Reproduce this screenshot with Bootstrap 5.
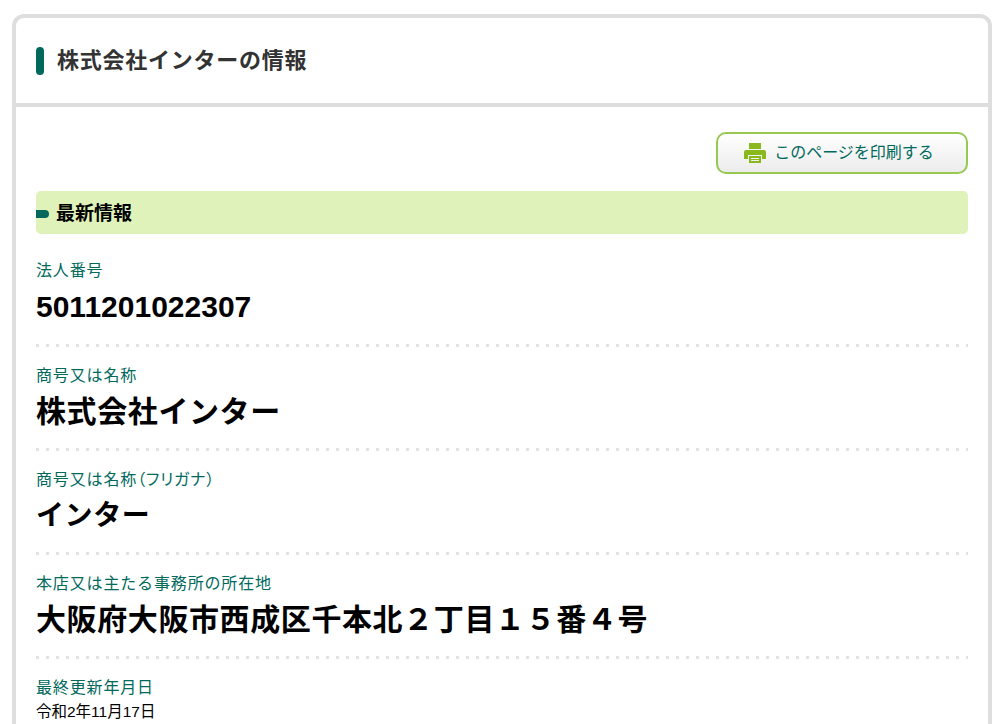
<!DOCTYPE html>
<html lang="ja">

<head>
  <meta charset="UTF-8" />
  <meta name="viewport" content="width=device-width, initial-scale=1.0" />
  <title>株式会社インターの情報</title>
  <link href="https://cdn.jsdelivr.net/npm/bootstrap@5.3.3/dist/css/bootstrap.min.css" rel="stylesheet" />
  <style>
    html, body {
      height: 724px;
      overflow: hidden;
    }

    body {
      font-family: "Liberation Sans", "Noto Sans CJK JP", sans-serif;
      background: #fff;
      color: #000;
      padding: 14px 16px 0 12px;
    }

    .info-box {
      border: 4px solid #dedede;
      border-bottom: 0;
      border-radius: 12px 12px 0 0;
      height: 710px;
    }

    .info-head {
      height: 85px;
      padding-left: 20px;
      border-bottom: 4px solid #dedede;
      box-sizing: content-box;
    }

    .info-head::before {
      content: "";
      width: 8px;
      height: 28px;
      margin-right: 13px;
      background: #00695c;
      border-radius: 4px;
    }

    .info-head h1 {
      margin: 0;
      font-size: 22px;
      line-height: 28px;
      font-weight: 700;
      letter-spacing: .75px;
      color: #333;
    }

    .info-body {
      padding: 25px 20px 0;
    }

    .print-btn {
      width: 252px;
      height: 42px;
      padding-right: 6px;
      border: 2px solid #97c851;
      border-radius: 10px;
      background: linear-gradient(#fff, #ececec);
      color: #00695c;
      font-size: 16px;
    }

    .print-btn svg {
      width: 22px;
      height: 20px;
    }

    .latest-bar {
      height: 43px;
      margin-top: 17px;
      margin-bottom: 26px;
      padding-top: 3px;
      background: #dff2b9;
      border-radius: 5px;
      font-size: 19px;
      font-weight: 700;
    }

    .latest-bar::before {
      content: "";
      width: 13px;
      height: 8px;
      margin-right: 7px;
      background: #00695c;
      border-radius: 0 4px 4px 0;
    }

    .info-row {
      height: 104px;
      padding-bottom: 3px;
      background: repeating-linear-gradient(90deg, #e2e2e2 0 3px, transparent 3px 10px) left bottom / 100% 3px no-repeat;
    }

    .info-row + .info-row {
      padding-top: 18px;
    }

    .first-row {
      height: 87px;
    }

    .last-row {
      height: auto;
      padding-bottom: 0;
      background: none;
    }

    .info-label {
      display: block;
      font-size: 16px;
      line-height: 22px;
      letter-spacing: .85px;
      color: #00695c;
    }

    .label-kana {
      font-feature-settings: "palt";
    }

    .info-value {
      margin-top: 4px;
      font-size: 30px;
      line-height: 42px;
      font-weight: 700;
      letter-spacing: .6px;
    }

    .info-number {
      letter-spacing: 0;
    }

    .info-kana {
      font-size: 28px;
    }

    .info-date {
      margin-top: 1px;
      font-size: 15.5px;
      line-height: 24px;
    }
  </style>
</head>

<body>
  <div class="info-box">
    <div class="info-head d-flex align-items-center">
      <h1>株式会社インターの情報</h1>
    </div>
    <div class="info-body">
      <div class="d-flex justify-content-end">
        <a href="#" class="print-btn d-flex align-items-center justify-content-center gap-2 text-decoration-none">
          <svg viewBox="0 0 22 20" aria-hidden="true">
            <path fill="#8ab81f" d="M5 0h12v6H5zM2 7h18a2 2 0 0 1 2 2v7h-4v-4H4v4H0V9a2 2 0 0 1 2-2z" />
            <path fill="#8ab81f" d="M5 13h12v7H5zm2 2v1h8v-1zm0 2v1h8v-1z" fill-rule="evenodd" />
          </svg>
          このページを印刷する
        </a>
      </div>
      <h2 class="latest-bar d-flex align-items-center">最新情報</h2>
      <dl class="m-0">
        <div class="info-row first-row">
          <dt class="info-label fw-normal">法人番号</dt>
          <dd class="info-value info-number mb-0">5011201022307</dd>
        </div>
        <div class="info-row">
          <dt class="info-label fw-normal">商号又は名称</dt>
          <dd class="info-value mb-0">株式会社インター</dd>
        </div>
        <div class="info-row">
          <dt class="info-label label-kana fw-normal">商号又は名称（フリガナ）</dt>
          <dd class="info-value info-kana mb-0">インター</dd>
        </div>
        <div class="info-row">
          <dt class="info-label fw-normal">本店又は主たる事務所の所在地</dt>
          <dd class="info-value mb-0">大阪府大阪市西成区千本北２丁目１５番４号</dd>
        </div>
        <div class="info-row last-row">
          <dt class="info-label fw-normal">最終更新年月日</dt>
          <dd class="info-date mb-0">令和2年11月17日</dd>
        </div>
      </dl>
    </div>
  </div>
  <script src="https://cdn.jsdelivr.net/npm/bootstrap@5.3.3/dist/js/bootstrap.bundle.min.js"></script>
</body>

</html>
